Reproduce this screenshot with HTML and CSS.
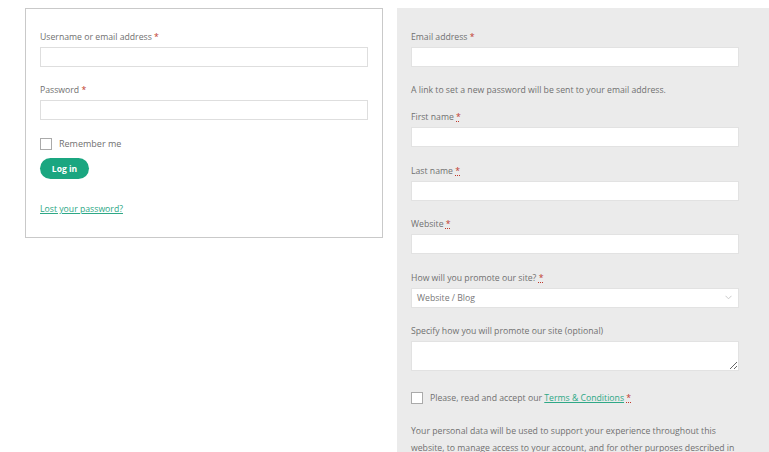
FILE: index.html
```html
<!DOCTYPE html>
<html lang="en">
<head>
<meta charset="utf-8">
<title>Login / Register</title>
<link rel="stylesheet" href="styles.css">
</head>
<body>
<div class="page">
  <form class="login-box">
    <div class="field">
      <label class="label">Username or email address <span class="req">*</span></label>
      <input class="input" type="text">
    </div>
    <div class="field">
      <label class="label">Password <span class="req">*</span></label>
      <input class="input" type="password">
    </div>
    <label class="check-row remember">
      <span class="checkbox"></span>
      <span>Remember me</span>
    </label>
    <button class="btn" type="button">Log in</button>
    <a class="link lost" href="#">Lost your password?</a>
  </form>

  <form class="register-panel">
    <div class="field">
      <label class="label">Email address <span class="req">*</span></label>
      <input class="input" type="email">
    </div>
    <p class="note">A link to set a new password will be sent to your email address.</p>
    <div class="field">
      <label class="label">First name <abbr class="req abbr">*</abbr></label>
      <input class="input" type="text">
    </div>
    <div class="field">
      <label class="label">Last name <abbr class="req abbr">*</abbr></label>
      <input class="input" type="text">
    </div>
    <div class="field">
      <label class="label">Website <abbr class="req abbr">*</abbr></label>
      <input class="input" type="text">
    </div>
    <div class="field">
      <label class="label">How will you promote our site? <abbr class="req abbr">*</abbr></label>
      <div class="select">
        <span>Website / Blog</span>
        <svg class="chev" width="7" height="5" viewBox="0 0 7 5"><path d="M0.5 0.8 L3.5 3.8 L6.5 0.8" fill="none" stroke="#c4c4c4" stroke-width="0.9"/></svg>
      </div>
    </div>
    <div class="field">
      <label class="label">Specify how you will promote our site (optional)</label>
      <textarea class="textarea"></textarea>
    </div>
    <label class="check-row terms">
      <span class="checkbox"></span>
      <span>Please, read and accept our <a class="link" href="#">Terms &amp; Conditions</a> <abbr class="req abbr">*</abbr></span>
    </label>
    <p class="privacy">Your personal data will be used to support your experience throughout this website, to manage access to your account, and for other purposes described in our privacy policy.</p>
  </form>
</div>
</body>
</html>
```
FILE: styles.css
```css
html, body {
  margin: 0;
  padding: 0;
  background: #ffffff;
}
body {
  font-family: "Open Sans", "Liberation Sans", sans-serif;
  font-size: 8.7px;
  color: #707070;
  overflow: hidden;
  height: 452px;
}
.page {
  display: flex;
  align-items: flex-start;
  gap: 14px;
  padding: 8px 0 0 25px;
  height: 444px;
  overflow: hidden;
}
.login-box {
  width: 328px;
  border: 1px solid #c9c9c9;
  padding: 22px 14px 21px;
  display: flex;
  flex-direction: column;
  align-items: flex-start;
}
.register-panel {
  flex: none;
  box-sizing: border-box;
  width: 372px;
  height: 444px;
  overflow: hidden;
  background: #ebebeb;
  padding: 22.5px 0 0 14px;
  display: flex;
  flex-direction: column;
  align-items: flex-start;
}
.field {
  display: flex;
  flex-direction: column;
  width: 328px;
  margin-bottom: 17px;
}
.register-panel .field {
  margin-bottom: 17.5px;
}
.label {
  display: block;
  line-height: 13px;
  margin-bottom: 3px;
}
.req {
  color: #c0392b;
}
.abbr {
  text-decoration: underline dotted;
  text-underline-offset: 1px;
  text-decoration-thickness: 1px;
}
.input {
  box-sizing: border-box;
  width: 328px;
  height: 20px;
  margin: 0;
  border: 1px solid #dedede;
  background: #ffffff;
  border-radius: 0;
  outline: none;
  padding: 0 8px;
}
.register-panel .input,
.register-panel .select,
.register-panel .textarea {
  border-color: #e2e2e2;
}
.select {
  box-sizing: border-box;
  width: 328px;
  height: 20px;
  background: #ffffff;
  border: 1px solid #e2e2e2;
  display: flex;
  align-items: center;
  justify-content: space-between;
  padding: 0 6px 0 5px;
  color: #777;
}
.textarea {
  box-sizing: border-box;
  width: 328px;
  height: 30px;
  margin: 0;
  border: 1px solid #e2e2e2;
  background: #ffffff;
  border-radius: 0;
  resize: vertical;
  outline: none;
}
.note {
  margin: 0 0 14px;
  line-height: 13px;
}
.check-row {
  display: flex;
  align-items: center;
  gap: 7px;
  line-height: 13px;
}
.checkbox {
  box-sizing: border-box;
  width: 12px;
  height: 12px;
  border: 1px solid #aaaaaa;
  background: #ffffff;
  flex: none;
}
.remember {
  margin-top: 0;
  font-size: 9px;
}
.btn {
  margin-top: 8px;
  width: 49px;
  height: 21px;
  border: none;
  border-radius: 11px;
  background: #1aa680;
  color: #ffffff;
  font-family: inherit;
  font-size: 8.5px;
  font-weight: 700;
  padding: 0;
  cursor: pointer;
}
.link {
  color: #2ea886;
  text-decoration: underline;
}
.lost {
  margin-top: 24px;
  line-height: 13px;
}
.terms {
  margin-top: 3px;
}
.privacy {
  margin: 18px 0 0;
  width: 335px;
  line-height: 17px;
}
```
